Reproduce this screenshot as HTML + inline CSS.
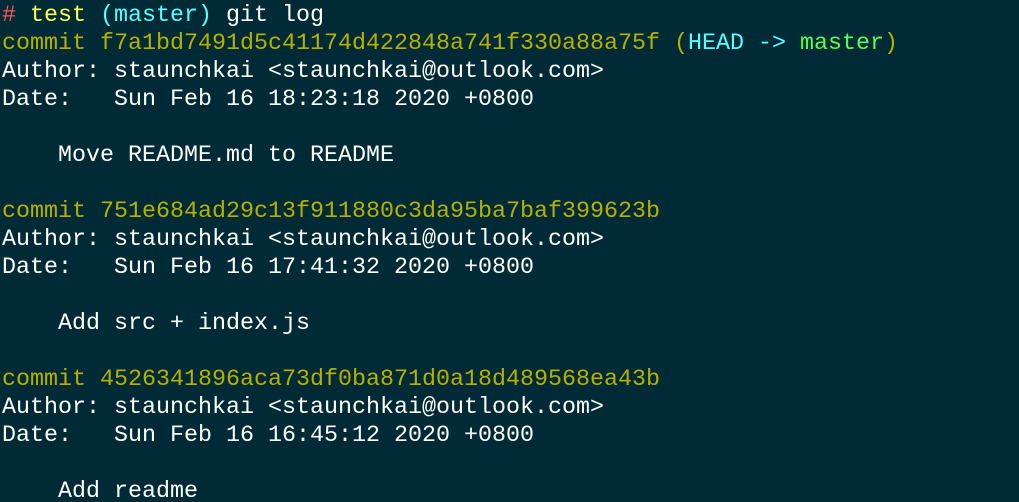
<!DOCTYPE html>
<html><head><meta charset="utf-8"><style>
html,body{margin:0;padding:0;background:#002b36;width:1019px;height:502px;overflow:hidden}
pre{margin:0;padding:2px 0 0 2px;font-family:"Liberation Mono",monospace;font-size:23.33px;line-height:28px;color:#ffffff;white-space:pre}
.y{color:#b8b000}.by{color:#ffff55}.c{color:#55ffff}.r{color:#ff5555}.g{color:#55ff55}
</style></head><body><pre><span class="r">#</span> <span class="by">test</span> <span class="c">(master)</span> git log
<span class="y">commit f7a1bd7491d5c41174d422848a741f330a88a75f (</span><span class="c">HEAD -&gt; </span><span class="g">master</span><span class="y">)</span>
Author: staunchkai &lt;staunchkai@outlook.com&gt;
Date:   Sun Feb 16 18:23:18 2020 +0800

    Move README.md to README

<span class="y">commit 751e684ad29c13f911880c3da95ba7baf399623b</span>
Author: staunchkai &lt;staunchkai@outlook.com&gt;
Date:   Sun Feb 16 17:41:32 2020 +0800

    Add src + index.js

<span class="y">commit 4526341896aca73df0ba871d0a18d489568ea43b</span>
Author: staunchkai &lt;staunchkai@outlook.com&gt;
Date:   Sun Feb 16 16:45:12 2020 +0800

    Add readme
</pre></body></html>
